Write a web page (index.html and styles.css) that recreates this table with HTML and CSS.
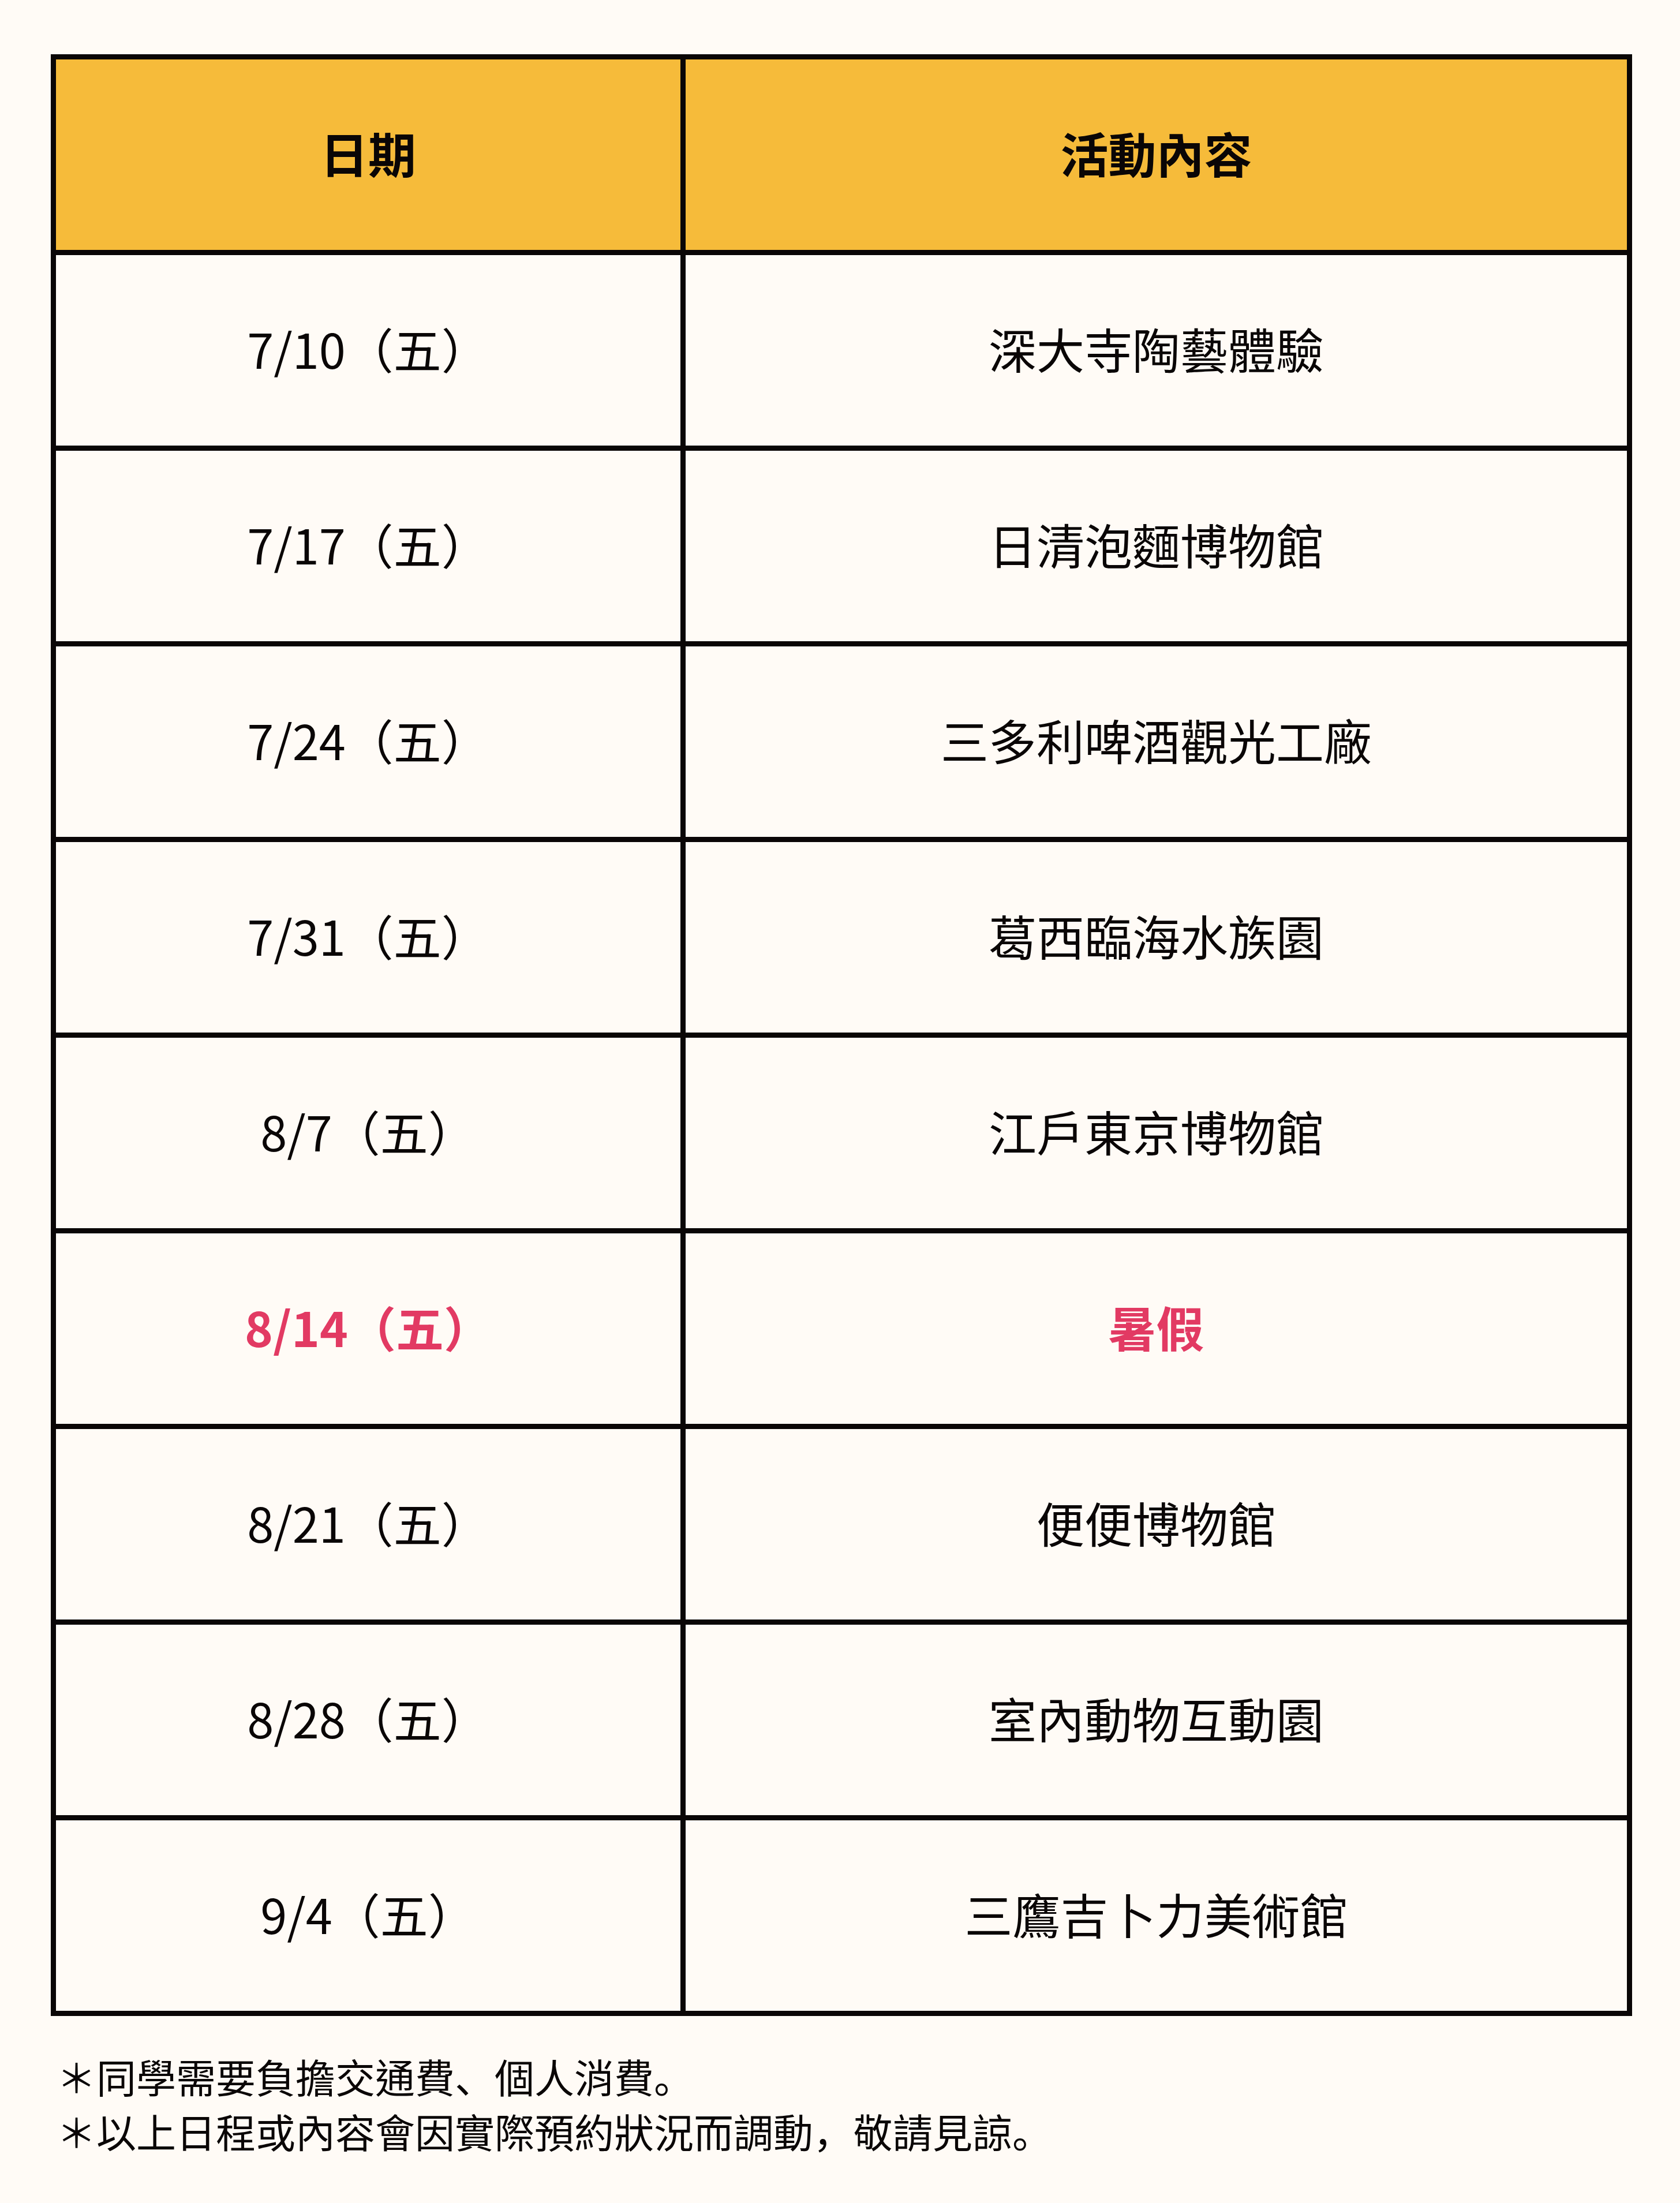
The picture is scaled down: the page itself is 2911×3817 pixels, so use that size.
FILE: index.html
```html
<!DOCTYPE html>
<html lang="zh-Hant">
<head>
<meta charset="utf-8">
<title>活動時間表</title>
<link rel="stylesheet" href="styles.css">
</head>
<body>
<main class="page">
  <div class="schedule">
    <div class="cell head">日期</div>
    <div class="cell head">活動內容</div>

    <div class="cell">7/10（五）</div>
    <div class="cell">深大寺陶藝體驗</div>

    <div class="cell">7/17（五）</div>
    <div class="cell">日清泡麵博物館</div>

    <div class="cell">7/24（五）</div>
    <div class="cell">三多利啤酒觀光工廠</div>

    <div class="cell">7/31（五）</div>
    <div class="cell">葛西臨海水族園</div>

    <div class="cell">8/7（五）</div>
    <div class="cell">江戶東京博物館</div>

    <div class="cell holiday">8/14（五）</div>
    <div class="cell holiday">暑假</div>

    <div class="cell">8/21（五）</div>
    <div class="cell">便便博物館</div>

    <div class="cell">8/28（五）</div>
    <div class="cell">室內動物互動園</div>

    <div class="cell">9/4（五）</div>
    <div class="cell">三鷹吉卜力美術館</div>
  </div>
  <div class="notes">
    <p>＊同學需要負擔交通費<span class="punct" lang="ja">、</span>個人消費<span class="punct" lang="ja">。</span></p>
    <p>＊以上日程或內容會因實際預約狀況而調動<span class="punct" lang="ja">，</span>敬請見諒<span class="punct" lang="ja">。</span></p>
  </div>
</main>
</body>
</html>
```

FILE: styles.css
```css
html, body {
  margin: 0;
  padding: 0;
  background: #fffbf6;
}

body {
  font-family: "Noto Sans CJK TC", "Noto Sans CJK SC", "Noto Sans", sans-serif;
  color: #0a0606;
}

.page {
  padding: 94px 0 0 88px;
}

.schedule {
  display: grid;
  grid-template-columns: 1082px 1631px;
  grid-auto-rows: 330px;
  gap: 9px;
  width: 2722px;
  background: #0a0606;
  border: 9px solid #0a0606;
}

.cell {
  display: flex;
  align-items: center;
  justify-content: center;
  background: #fffbf6;
  font-size: 83px;
  font-weight: 400;
  padding-bottom: 8px;
  box-sizing: border-box;
}

.cell.head {
  background: #f6bb3a;
  font-weight: 700;
}

.cell.holiday {
  color: #e23a63;
  font-weight: 700;
}

.notes {
  margin-top: 57px;
  padding-left: 10px;
}

.notes p {
  margin: 0;
  font-size: 69px;
  line-height: 95px;
}

.punct {
  font-family: "Noto Sans CJK JP", "Noto Sans CJK SC", sans-serif;
}
```
